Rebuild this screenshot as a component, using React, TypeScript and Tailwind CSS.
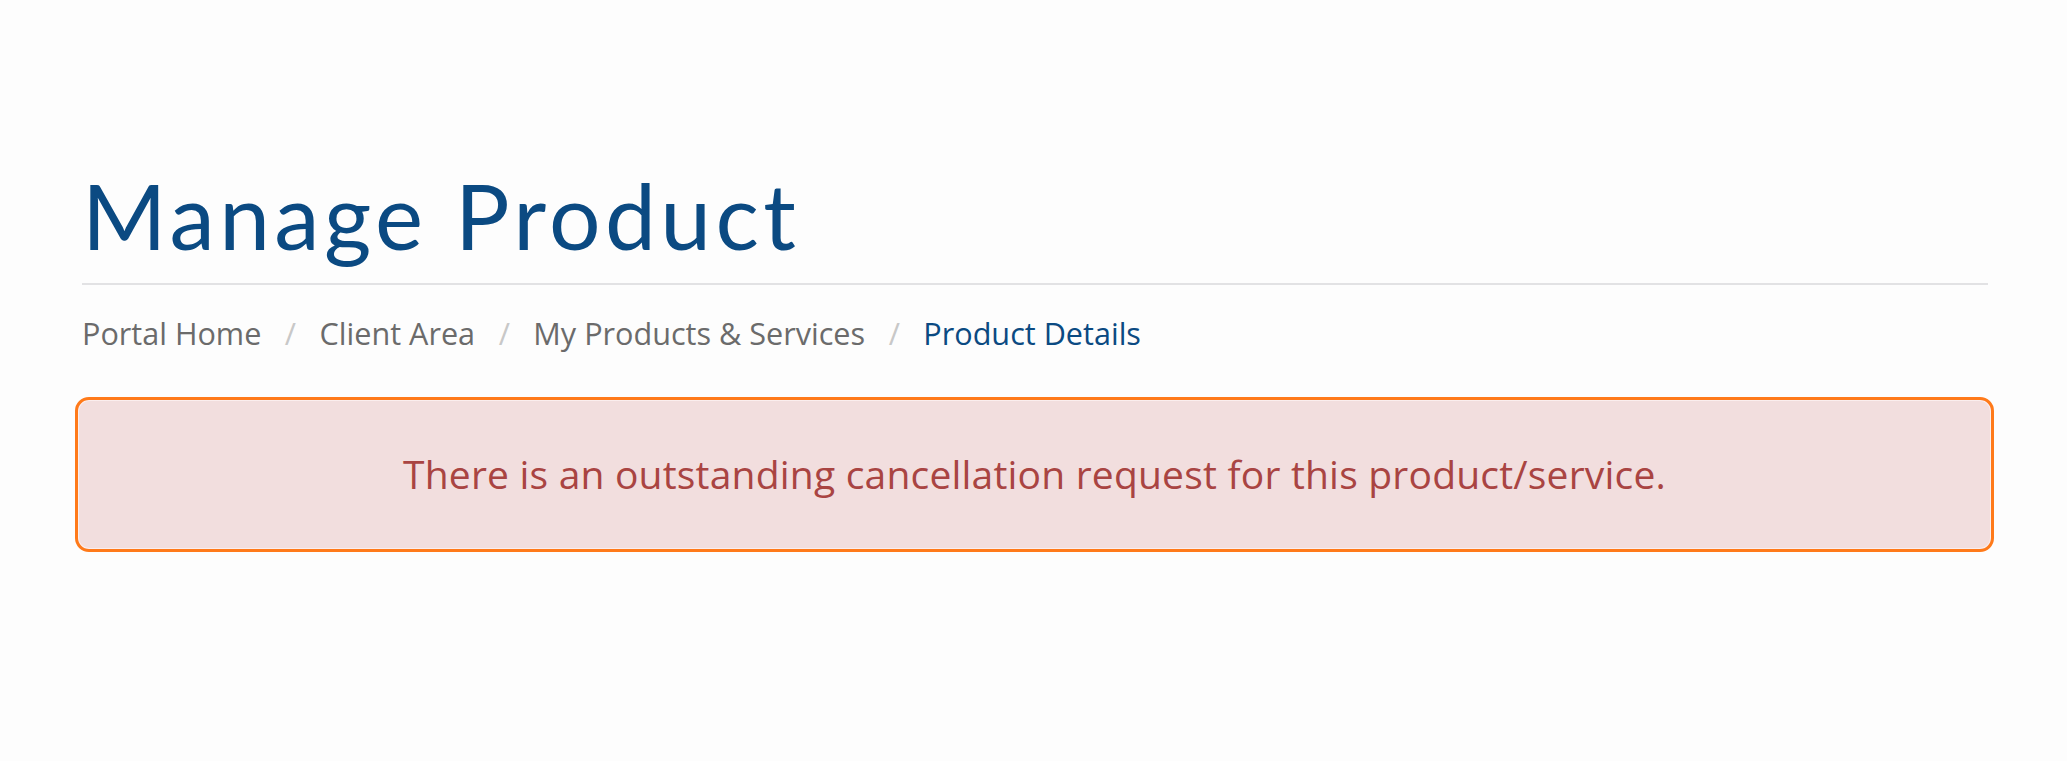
import React from 'react';

const crumbs = ['Portal Home', 'Client Area', 'My Products & Services'];

const App: React.FC = () => {
  return (
    <div className="min-h-screen w-full bg-[#fdfdfd]">
      <div className="pl-[82px] pr-[79px] pt-[160px]">
        {/* Page title */}
        <h1 className="font-['Lato',sans-serif] text-[91px] leading-[110px] font-normal tracking-[4.4px] text-[#0b4a82]">
          Manage Product
        </h1>
        <div className="mt-[13px] h-[2px] bg-[#e2e2e4]" />

        {/* Breadcrumb */}
        <nav className="mt-[28px] flex items-center font-['Open_Sans',sans-serif] text-[30.6px] leading-[40px] text-[#6b6b6b]">
          {crumbs.map((c) => (
            <React.Fragment key={c}>
              <span>{c}</span>
              <span className="px-[23.5px] text-[#c8c8c8]">/</span>
            </React.Fragment>
          ))}
          <span className="text-[#0b4a82]">Product Details</span>
        </nav>

        {/* Alert */}
        <div className="-ml-[7px] -mr-[6px] mt-[44px] flex h-[155px] items-center justify-center rounded-[14px] border-[3px] border-[#ff7a1a] bg-[#f2dede] shadow-[inset_0_0_0_1px_#fbeeee]">
          <p className="font-['Open_Sans',sans-serif] text-[39px] tracking-[0.2px] text-[#a94442]">
            There is an outstanding cancellation request for this product/service.
          </p>
        </div>
      </div>
    </div>
  );
};

export default App;
